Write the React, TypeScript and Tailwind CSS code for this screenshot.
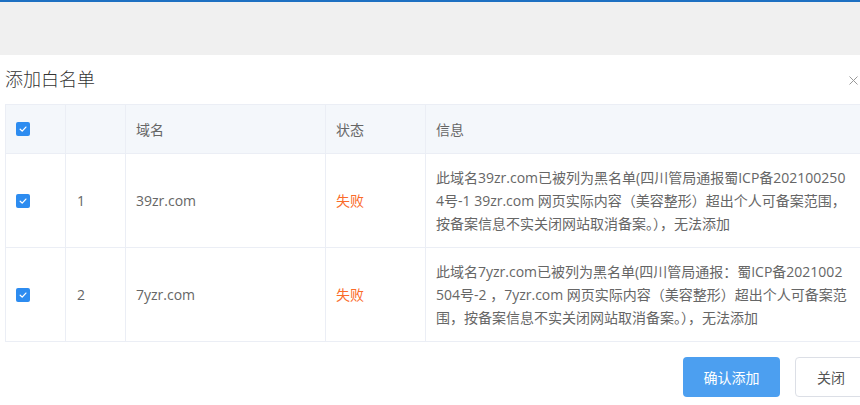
import React from "react";

const rows = [
  {
    id: 1,
    domain: "39zr.com",
    info: [
      "此域名39zr.com已被列为黑名单(四川管局通报蜀ICP备202100250",
      "4号-1 39zr.com 网页实际内容（美容整形）超出个人可备案范围，",
      "按备案信息不实关闭网站取消备案。），无法添加",
    ],
  },
  {
    id: 2,
    domain: "7yzr.com",
    info: [
      "此域名7yzr.com已被列为黑名单(四川管局通报：蜀ICP备2021002",
      "504号-2 ，7yzr.com 网页实际内容（美容整形）超出个人可备案范",
      "围，按备案信息不实关闭网站取消备案。），无法添加",
    ],
  },
];

function Check() {
  return (
    <span className="flex h-[14px] w-[14px] items-center justify-center rounded-[2px] bg-[#2d8cf0]">
      <svg width="10" height="10" viewBox="0 0 10 10" fill="none">
        <path d="M2.2 5.2 L4.2 7.1 L7.9 3.1" stroke="#fff" strokeWidth="1.3" strokeLinecap="round" strokeLinejoin="round" />
      </svg>
    </span>
  );
}

export default function App() {
  return (
    <div
      className="h-[405px] w-[860px] overflow-hidden bg-white text-[14px] text-[#666]"
      style={{ fontFamily: '"Open Sans", "Noto Sans CJK SC", sans-serif' }}
    >
      <div className="h-[2px] bg-[#1e70c2]" />
      <div className="h-[53px] bg-[#f0f0f0]" />
      <div className="flex h-[49px] items-center justify-between pl-[5px] pr-[2px]">
        <span className="text-[18px] font-light text-[#333]">添加白名单</span>
        <svg width="9" height="9" viewBox="0 0 9 9" className="mt-[1px]">
          <path d="M0.5 0.5 L8.5 8.5 M8.5 0.5 L0.5 8.5" stroke="#999" strokeWidth="1" />
        </svg>
      </div>
      <div className="ml-[5px] w-[880px] border-l border-t border-[#ebeef5]">
        <div className="flex h-[49px] border-b border-[#ebeef5] bg-[#f4f7fb]">
          <div className="flex w-[60px] shrink-0 items-center border-r border-[#ebeef5] pl-[10px]">
            <Check />
          </div>
          <div className="w-[60px] shrink-0 border-r border-[#ebeef5]" />
          <div className="flex w-[200px] shrink-0 items-center border-r border-[#ebeef5] pl-[10px]">域名</div>
          <div className="flex w-[100px] shrink-0 items-center border-r border-[#ebeef5] pl-[10px]">状态</div>
          <div className="flex w-[446px] shrink-0 items-center border-r border-[#ebeef5] pl-[10px]">信息</div>
        </div>
        {rows.map((r) => (
          <div key={r.id} className="flex h-[94px] border-b border-[#ebeef5]">
            <div className="flex w-[60px] shrink-0 items-center border-r border-[#ebeef5] pl-[10px]">
              <Check />
            </div>
            <div className="flex w-[60px] shrink-0 items-center border-r border-[#ebeef5] pl-[11px]">{r.id}</div>
            <div className="flex w-[200px] shrink-0 items-center border-r border-[#ebeef5] pl-[10px]">{r.domain}</div>
            <div className="flex w-[100px] shrink-0 items-center border-r border-[#ebeef5] pl-[10px] text-[#fa6b2a]">失败</div>
            <div className="flex w-[446px] shrink-0 items-center border-r border-[#ebeef5] pl-[10px]">
              <p className="leading-[23px]">
                {r.info.map((l, i) => (
                  <span key={i} className="block whitespace-nowrap">{l}</span>
                ))}
              </p>
            </div>
          </div>
        ))}
      </div>
      <div className="mr-[-7px] flex justify-end gap-[15px] pt-[15px]">
        <button className="h-[40px] w-[97px] rounded-[4px] bg-[#4c9ff0] text-[14px] text-white">确认添加</button>
        <button className="h-[40px] w-[72px] rounded-[4px] border border-[#dcdfe6] bg-white text-[14px] text-[#555]">关闭</button>
      </div>
    </div>
  );
}
